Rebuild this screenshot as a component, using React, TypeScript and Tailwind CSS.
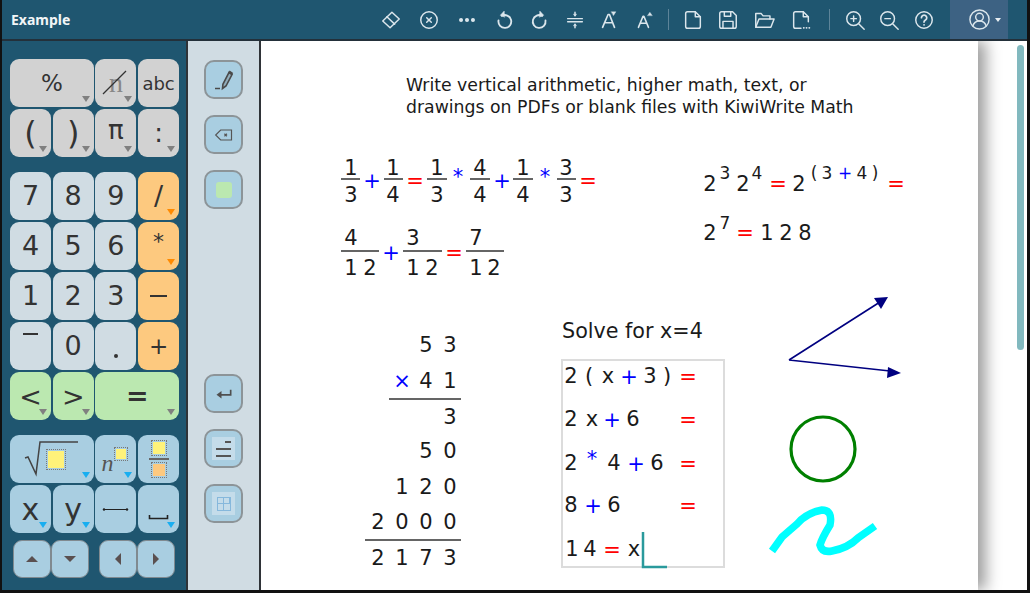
import type { ReactNode } from 'react';

const FONT = "font-['DejaVu_Sans',sans-serif]";

type Tint = 'gray' | 'orange' | 'blue' | 'none';
type Glyph = [string, number, number, string?];

const RED = 'text-[#ff0000]';
const BLUE = 'text-[#0000ff]';

function ToolIcon({ w, children }: { w: string; children: ReactNode }) {
  return (
    <button type="button" className={`flex h-full items-center justify-center ${w}`}>
      <svg
        viewBox="0 0 24 24"
        className="h-[22px] w-[22px]"
        fill="none"
        stroke="#dbe6ec"
        strokeWidth="1.6"
        strokeLinecap="round"
        strokeLinejoin="round"
      >
        {children}
      </svg>
    </button>
  );
}

function Divider() {
  return <div className="mx-[8px] h-[21px] w-px bg-[#5d8499]" />;
}

function Toolbar() {
  return (
    <div className="flex h-[39px] shrink-0 items-center bg-[#1f5670] pl-[9px]">
      <span className="w-[361px] font-['Noto_Sans',sans-serif] text-[14px] font-bold text-[#f1f5f7]">Example</span>
      <div className="flex h-full items-center">
        <ToolIcon w="w-[38px]">
          <path d="M3 13 13 3.5l8 7.5-10 9.5z" />
          <path d="m7.5 8.5 8.5 8" />
        </ToolIcon>
        <ToolIcon w="w-[38px]">
          <circle cx="12" cy="12" r="9" />
          <path d="m9.5 9.5 5 5m0-5-5 5" />
        </ToolIcon>
        <ToolIcon w="w-[38px]">
          <circle cx="5.5" cy="12" r="1.4" fill="#dbe6ec" />
          <circle cx="12" cy="12" r="1.4" fill="#dbe6ec" />
          <circle cx="18.5" cy="12" r="1.4" fill="#dbe6ec" />
        </ToolIcon>
        <ToolIcon w="w-[36px]">
          <path d="M9.5 7.5A7 7 0 1 1 6 12.5" strokeWidth="2" />
          <path d="M12 2.5 8 6.8l4.5 2z" fill="#dbe6ec" strokeWidth="0.6" />
        </ToolIcon>
        <ToolIcon w="w-[36px]">
          <path d="M14.5 7.5A7 7 0 1 0 18 12.5" strokeWidth="2" />
          <path d="m12 2.5 4 4.3-4.5 2z" fill="#dbe6ec" strokeWidth="0.6" />
        </ToolIcon>
        <ToolIcon w="w-[34px]">
          <path d="M4 10.5h16M4 14h16" />
          <path d="M12 3.5v3.5M12 17v3.5" />
          <path d="m10.5 6 1.5 2 1.5-2zM10.5 18l1.5-2 1.5 2z" fill="#dbe6ec" strokeWidth="0.6" />
        </ToolIcon>
        <ToolIcon w="w-[34px]">
          <path d="m5 20 6-14h1.5L18 20M7.5 15h8" strokeWidth="1.8" />
          <path d="m14.5 3 5 0-2.5 4z" fill="#dbe6ec" strokeWidth="0.4" />
        </ToolIcon>
        <ToolIcon w="w-[34px]">
          <path d="m7 20 5-12h1l5 12M9 15.5h7" strokeWidth="1.7" />
          <path d="m17 7 2.5-3.5L22 7z" fill="#dbe6ec" strokeWidth="0.4" />
        </ToolIcon>
        <Divider />
        <ToolIcon w="w-[32px]">
          <path d="M6 3h8.5L20 8.5V19a2 2 0 0 1-2 2H6a2 2 0 0 1-2-2V5a2 2 0 0 1 2-2z" />
          <path d="M14.5 3v5.5H20" />
        </ToolIcon>
        <ToolIcon w="w-[38px]">
          <path d="M5 3h12l4 4v12a2 2 0 0 1-2 2H5a2 2 0 0 1-2-2V5a2 2 0 0 1 2-2z" />
          <path d="M8 3v5h7V3M6.5 21v-7.5h11V21" />
        </ToolIcon>
        <ToolIcon w="w-[34px]">
          <path d="M3 20V5h6l2 2.5h7.5V11" />
          <path d="M3 20 6.5 11H23l-3.5 9z" />
        </ToolIcon>
        <ToolIcon w="w-[40px]">
          <path d="M12 21H6a2 2 0 0 1-2-2V5a2 2 0 0 1 2-2h8.5L20 8.5V14" />
          <path d="M14.5 3v5.5H20" />
          <path d="M15 20.5h.1M18 20.5h.1M21 20.5h.1" strokeWidth="2" />
        </ToolIcon>
        <Divider />
        <ToolIcon w="w-[34px]">
          <circle cx="10.5" cy="10.5" r="7.5" />
          <path d="m16 16 6 6M7.5 10.5h6M10.5 7.5v6" />
        </ToolIcon>
        <ToolIcon w="w-[34px]">
          <circle cx="10.5" cy="10.5" r="7.5" />
          <path d="m16 16 6 6M7.5 10.5h6" />
        </ToolIcon>
        <ToolIcon w="w-[36px]">
          <circle cx="12" cy="12" r="9" />
          <path d="M9.2 9.5a2.9 2.9 0 1 1 4.4 2.5c-1 .6-1.6 1.2-1.6 2.3M12 17.2h.1" strokeWidth="1.9" />
        </ToolIcon>
      </div>
      <div className="ml-[8px] flex h-full w-[58px] items-center gap-[4px] bg-[#3d6283] pl-[18px]">
        <svg
          viewBox="0 0 24 24"
          className="h-[23px] w-[23px]"
          fill="none"
          stroke="#dbe6ec"
          strokeWidth="1.5"
        >
          <circle cx="12" cy="12" r="10" />
          <circle cx="12" cy="9.5" r="4" />
          <path d="M5 19c1-4 4-5.5 7-5.5s6 1.5 7 5.5" />
        </svg>
        <span className="h-0 w-0 border-x-[3px] border-t-[4px] border-x-transparent border-t-[#e8eef2]" />
      </div>
    </div>
  );
}

function Key({
  bg,
  tint = 'none',
  wide,
  className = '',
  children,
}: {
  bg: string;
  tint?: Tint;
  wide?: boolean;
  className?: string;
  children?: ReactNode;
}) {
  const tints = {
    gray: 'border-t-[#808080]',
    orange: 'border-t-[#ff8a00]',
    blue: 'border-t-[#19aef0]',
    none: '',
  };
  return (
    <button
      type="button"
      className={`relative flex h-[48px] items-center justify-center rounded-[9px] ${FONT} text-[#333] ${bg} ${wide ? 'col-span-2' : ''} ${className}`}
    >
      {children}
      {tint !== 'none' && (
        <span
          className={`absolute bottom-[5px] right-[4px] h-0 w-0 border-x-[4.5px] border-t-[6px] border-x-transparent ${tints[tint]}`}
        />
      )}
    </button>
  );
}

const GRAY = 'bg-[#d2d2d2]';
const LIGHT = 'bg-[#d0dce3]';
const ORANGE = 'bg-[#fdc97f]';
const GREEN = 'bg-[#bbe8b0]';
const SKY = 'bg-[#a9cee1]';

function KeyGrid({ className = '', children }: { className?: string; children: ReactNode }) {
  return <div className={`grid grid-cols-[repeat(4,41px)] gap-x-[1.7px] gap-y-[2px] ${className}`}>{children}</div>;
}

function Slot({ size, color = 'bg-[#fff27a]' }: { size: string; color?: string }) {
  return <span className={`block border border-dotted border-[#777] p-[1px] ${size}`}><span className={`block h-full w-full ${color}`} /></span>;
}

function NudgeKey({ points }: { points: string }) {
  return (
    <button
      type="button"
      className="flex h-[38px] w-[38px] items-center justify-center rounded-[9px] border-[1.5px] border-[#808a90] bg-[#a9cee1]"
    >
      <svg viewBox="0 0 14 14" className="h-[14px] w-[14px]">
        <polygon points={points} fill="#5a5050" />
      </svg>
    </button>
  );
}

function Keypad() {
  const num = 'text-[27px]';
  return (
    <div className="flex w-[184px] shrink-0 flex-col bg-[#1f5670] pl-[8px] pt-[18px]">
      <KeyGrid>
        <Key bg={GRAY} tint="gray" wide className="text-[23px]">%</Key>
        <Key bg={GRAY} tint="gray">
          <span className="font-['Liberation_Serif',serif] text-[28px] text-[#888]">n</span>
          <svg viewBox="0 0 41 48" className="absolute inset-0">
            <path d="M8 35 31 12" stroke="#333" strokeWidth="1.3" />
          </svg>
        </Key>
        <Key bg={GRAY} className="text-[18px]">abc</Key>
        <Key bg={GRAY} tint="gray" className="text-[32px]">(</Key>
        <Key bg={GRAY} tint="gray" className="text-[32px]">)</Key>
        <Key bg={GRAY} tint="gray" className="pb-[6px] text-[26px]">π</Key>
        <Key bg={GRAY} tint="gray" className="text-[26px]">:</Key>
      </KeyGrid>
      <KeyGrid className="mt-[15px]">
        <Key bg={LIGHT} className={num}>7</Key>
        <Key bg={LIGHT} className={num}>8</Key>
        <Key bg={LIGHT} className={num}>9</Key>
        <Key bg={ORANGE} tint="orange" className={num}>/</Key>
        <Key bg={LIGHT} className={num}>4</Key>
        <Key bg={LIGHT} className={num}>5</Key>
        <Key bg={LIGHT} className={num}>6</Key>
        <Key bg={ORANGE} tint="orange" className="pb-[10px] text-[22px]">*</Key>
        <Key bg={LIGHT} className={num}>1</Key>
        <Key bg={LIGHT} className={num}>2</Key>
        <Key bg={LIGHT} className={num}>3</Key>
        <Key bg={ORANGE} className={num}>
          <span className="h-[2px] w-[17px] bg-[#333]" />
        </Key>
        <Key bg={LIGHT}>
          <span className="mb-[25px] h-[2px] w-[15px] bg-[#333]" />
        </Key>
        <Key bg={LIGHT} className={num}>0</Key>
        <Key bg={LIGHT} className="text-[27px]">
          <span className="mt-[20px] h-[4px] w-[4px] rounded-full bg-[#333]" />
        </Key>
        <Key bg={ORANGE} className="text-[23px]">+</Key>
        <Key bg={GREEN} tint="gray" className={`${num} pt-[3px]`}>&lt;</Key>
        <Key bg={GREEN} tint="gray" className={`${num} pt-[3px]`}>&gt;</Key>
        <Key bg={GREEN} tint="gray" wide className="text-[27px] font-bold">=</Key>
      </KeyGrid>
      <KeyGrid className="mt-[15px]">
        <Key bg={SKY} tint="blue" wide>
          <svg viewBox="0 0 84 48" className="absolute inset-0 h-[48px] w-[84px]">
            <path d="M15 23l3-1 8 17 4-32h38" fill="none" stroke="#444" strokeWidth="1.5" />
          </svg>
          <Slot size="ml-[9px] h-[21px] w-[20px]" />
        </Key>
        <Key bg={SKY} tint="blue">
          <span className="mr-[17px] mt-[8px] font-['Liberation_Serif',serif] text-[24px] italic text-[#555]">n</span>
          <span className="absolute left-[19px] top-[12px]">
            <Slot size="h-[14px] w-[14px]" />
          </span>
        </Key>
        <Key bg={SKY}>
          <span className="flex flex-col items-center gap-[2px]">
            <Slot size="h-[16px] w-[16px]" />
            <span className="h-[2px] w-[20px] bg-[#666]" />
            <Slot size="h-[16px] w-[16px]" color="bg-[#fdc97f]" />
          </span>
        </Key>
        <Key bg={SKY} tint="blue" className="text-[30px]">x</Key>
        <Key bg={SKY} tint="blue" className="text-[30px]">y</Key>
        <Key bg={SKY}>
          <svg viewBox="0 0 41 48" className="absolute inset-0">
            <path d="M9 24.5h23" stroke="#222" strokeWidth="1" />
            <circle cx="9" cy="24.5" r="1.2" fill="#222" />
            <circle cx="32" cy="24.5" r="1.2" fill="#222" />
          </svg>
        </Key>
        <Key bg={SKY} tint="blue">
          <svg viewBox="0 0 41 48" className="absolute inset-0">
            <path d="M11.5 30v3.5h18V30" fill="none" stroke="#222" strokeWidth="1.6" />
          </svg>
        </Key>
      </KeyGrid>
      <div className="ml-[3px] mt-[7px] flex">
        <NudgeKey points="1,10 7,4 13,10" />
        <NudgeKey points="1,4 7,10 13,4" />
        <div className="w-[10px]" />
        <NudgeKey points="10,1 4,7 10,13" />
        <NudgeKey points="4,1 10,7 4,13" />
      </div>
    </div>
  );
}

function SideButton({ children }: { children: ReactNode }) {
  return (
    <button
      type="button"
      className="flex h-[39px] w-[39px] items-center justify-center rounded-[10px] border-2 border-[#8c9498] bg-[#a9cee1]"
    >
      {children}
    </button>
  );
}

function SidePanel() {
  return (
    <div className="flex w-[71px] shrink-0 flex-col items-center justify-between bg-[#d0dce3] pb-[67px] pt-[19px]">
      <div className="flex flex-col gap-[16px]">
        <SideButton>
          <svg viewBox="0 0 24 24" className="h-[24px] w-[24px]" fill="none" stroke="#4a4a4a">
            <path d="M3 20.5h5" strokeWidth="1.5" />
            <path d="M17 4.5 20 6.5 14 18l-3.5 2.5.4-4.2z" strokeWidth="1.6" fill="#4a4a4a" fillOpacity="0.25" />
            <path d="M17 3.5 20.5 6" strokeWidth="2.4" />
          </svg>
        </SideButton>
        <SideButton>
          <svg viewBox="0 0 24 24" className="h-[20px] w-[20px]" fill="none" stroke="#555" strokeWidth="1.4">
            <path d="M8 6h13v12H8l-6-6z" />
            <path d="m12.5 10.5 3 3m0-3-3 3" />
          </svg>
        </SideButton>
        <SideButton>
          <span className="h-[16px] w-[16px] rounded-[3px] bg-[#bbe8b0]" />
        </SideButton>
      </div>
      <div className="flex flex-col gap-[16px]">
        <SideButton>
          <svg viewBox="0 0 24 24" className="h-[20px] w-[20px]" fill="none" stroke="#4f4f4f" strokeWidth="2">
            <path d="M20 7v6H6" />
            <path d="M9 8.5 3 13l6 4.5z" fill="#4f4f4f" stroke="none" />
          </svg>
        </SideButton>
        <SideButton>
          <span className="flex h-[23px] w-[23px] flex-col items-end justify-center gap-[5px] bg-[#c4dcea] px-[4px]">
            <span className="h-[2px] w-[6px] bg-[#555]" />
            <span className="h-[2px] w-full bg-[#555]" />
            <span className="h-[2px] w-full bg-[#555]" />
          </span>
        </SideButton>
        <SideButton>
          <span className="flex h-[23px] w-[23px] items-center justify-center bg-[#c4dcea]">
            <span className="grid h-[14px] w-[14px] grid-cols-2 grid-rows-2 divide-x divide-[#86b8dc] border border-[#86b8dc]">
              <span className="border-b border-[#86b8dc]" />
              <span className="border-b border-[#86b8dc]" />
              <span />
              <span />
            </span>
          </span>
        </SideButton>
      </div>
    </div>
  );
}

// page coordinates, the paper starts at x=297, y=41
const paperGlyphs: Glyph[] = [
  ['1', 351, 167], ['3', 351, 194], ['+', 372, 180, BLUE], ['1', 393, 167], ['4', 393, 194],
  ['=', 415, 180, RED], ['1', 437, 167], ['3', 437, 194], ['*', 458, 176, BLUE], ['4', 480, 167], ['4', 480, 194],
  ['+', 502, 180, BLUE], ['1', 523, 167], ['4', 523, 194], ['*', 545, 176, BLUE], ['3', 566, 167], ['3', 566, 194],
  ['=', 588, 180, RED],
  ['4', 351, 237], ['1', 351, 267], ['2', 370, 267], ['+', 391, 252, BLUE], ['3', 413, 237], ['1', 413, 267], ['2', 432, 267],
  ['=', 454, 252, RED], ['7', 476, 237], ['1', 476, 267], ['2', 494, 267],
  ['2', 710, 183], ['2', 743, 183], ['=', 778, 183, RED], ['2', 799, 183], ['=', 896, 183, RED],
  ['2', 710, 232], ['=', 745, 232, RED], ['1', 767, 232], ['2', 786, 232], ['8', 805, 232],
  ['5', 426, 344], ['3', 450, 344], ['×', 402, 380, BLUE], ['4', 426, 380], ['1', 450, 380], ['3', 450, 416],
  ['5', 426, 450], ['0', 450, 450], ['1', 402, 486], ['2', 426, 486], ['0', 450, 486],
  ['2', 378, 521], ['0', 402, 521], ['0', 426, 521], ['0', 450, 521],
  ['2', 378, 557], ['1', 402, 557], ['7', 426, 557], ['3', 450, 557],
  ['2', 571, 375], ['(', 589, 375], ['x', 608, 375], ['+', 629, 376, BLUE], ['3', 650, 375], [')', 667, 375], ['=', 688, 376, RED],
  ['2', 571, 418], ['x', 592, 418], ['+', 612, 419, BLUE], ['6', 633, 418], ['=', 688, 419, RED],
  ['2', 571, 462], ['*', 592, 458, BLUE], ['4', 614, 462], ['+', 636, 463, BLUE], ['6', 657, 462], ['=', 688, 463, RED],
  ['8', 571, 504], ['+', 593, 505, BLUE], ['6', 614, 504], ['=', 688, 505, RED],
  ['1', 572, 548], ['4', 590, 548], ['=', 612, 549, RED], ['x', 634, 548],
];

const superGlyphs: Glyph[] = [
  ['3', 725, 172], ['4', 757, 172], ['(', 814, 172], ['3', 827, 172], ['+', 845, 172, BLUE], ['4', 862, 172], [')', 875, 172],
  ['7', 725, 222],
];

function GlyphLayer({ items, size }: { items: Glyph[]; size: string }) {
  return (
    <>
      {items.map(([ch, x, y, color], i) => (
        <span
          key={i}
          className={`absolute -translate-x-1/2 -translate-y-1/2 leading-none ${size} ${color ?? 'text-[#1a1a1a]'}`}
          style={{ left: x - 297, top: y - 40 }}
        >
          {ch}
        </span>
      ))}
    </>
  );
}

function Paper() {
  return (
    <div
      className={`relative ml-[36px] w-[681px] shrink-0 overflow-hidden bg-white ${FONT}`}
    >
      <p className="absolute left-[109px] top-[33px] whitespace-nowrap text-[17.3px] leading-[22px] text-[#1a1a1a]">
        Write vertical arithmetic, higher math, text, or
        <br />
        drawings on PDFs or blank files with KiwiWrite Math
      </p>
      <p className="absolute left-[265px] top-[277px] whitespace-nowrap text-[20.7px] leading-[26px] text-[#1a1a1a]">
        Solve for x=4
      </p>
      <div className="absolute left-[264px] top-[318px] h-[209px] w-[164px] border-2 border-[#dcdcdc]" />
      <svg viewBox="297 41 681 552" className="absolute inset-0 h-[552px] w-[681px]">
        <g stroke="#333" strokeWidth="1.5">
          <path d="M341 179h19M384 179h19M427 179h20M470 179h20M513 179h20M557 179h19" />
          <path d="M341 251h38M403 251h39M466 251h38" />
          <path d="M389 399h72M365 540h96" />
        </g>
        <path d="M643 532v35h24" fill="none" stroke="#2a9a9c" strokeWidth="2.5" />
        <g stroke="#000080" strokeWidth="1.6" fill="#000080">
          <path d="M789 360 880 302M789 360 890 371" />
          <path d="m888 297-14 1 7 11z" stroke="none" />
          <path d="m901 373-13-6-1 11z" stroke="none" />
        </g>
        <circle cx="823" cy="449" r="32" fill="none" stroke="#008000" strokeWidth="3.2" />
        <path
          d="M772 551 782 537Q790 530 797 524 806 513 822 510 833 510 830 525 822 538 820 545 822 553 832 551 848 548 858 538L875 526"
          fill="none"
          stroke="#00ffff"
          strokeWidth="7.5"
        />
      </svg>
      <GlyphLayer items={paperGlyphs} size="text-[21px]" />
      <GlyphLayer items={superGlyphs} size="text-[17px]" />
    </div>
  );
}

function Workspace() {
  return (
    <div className="relative flex min-w-0 flex-1 overflow-hidden bg-white">
      <div className="flex shadow-[8px_0_14px_rgba(0,0,0,0.38)]">
        <Paper />
      </div>
      <div className="absolute right-[3px] top-[4px] h-[305px] w-[7px] rounded-[4px] bg-[#82b9bf]" />
    </div>
  );
}

export default function App() {
  return (
    <div className="flex h-[593px] w-[1030px] flex-col overflow-hidden border-b-[3px] border-l-[2px] border-r-[3px] border-[#111]">
      <Toolbar />
      <div className="flex min-h-0 flex-1 border-t-2 border-[#23303a]">
        <Keypad />
        <div className="w-[2px] shrink-0 bg-[#2f3338]" />
        <SidePanel />
        <div className="w-[2px] shrink-0 bg-[#2f3338]" />
        <Workspace />
      </div>
    </div>
  );
}
